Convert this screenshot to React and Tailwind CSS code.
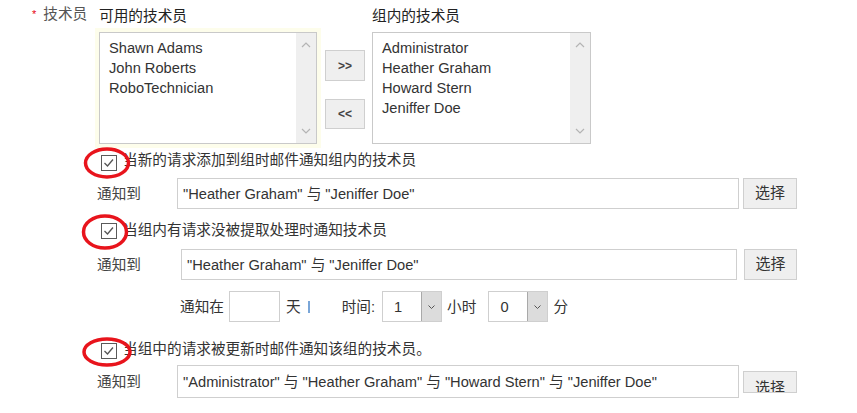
import React from 'react';

const FONT = { fontFamily: '"Liberation Sans", "Noto Sans CJK SC", sans-serif' };

const available = ['Shawn Adams', 'John Roberts', 'RoboTechnician'];
const members = ['Administrator', 'Heather Graham', 'Howard Stern', 'Jeniffer Doe'];

// Fake listbox with a windows style scrollbar
const ListBox = ({ items, width }) => (
    <div className={`flex h-[112px] border border-[#c9c9c9] bg-white ${width}`}>
        <div className="flex-1 pl-[9px] pt-[5px] leading-[20px]">
            {items.map((name) => (
                <div key={name}>{name}</div>
            ))}
        </div>
        <div className="w-[20px] bg-[#efefef] flex flex-col items-center justify-between py-[9px]">
            <svg width="10" height="6" viewBox="0 0 10 6">
                <polyline points="1,5 5,1 9,5" fill="none" stroke="#b4b4b4" strokeWidth="1.2" />
            </svg>
            <svg width="10" height="6" viewBox="0 0 10 6">
                <polyline points="1,1 5,5 9,1" fill="none" stroke="#b4b4b4" strokeWidth="1.2" />
            </svg>
        </div>
    </div>
);

const CheckBox = ({ className }) => (
    <svg width="16" height="16" viewBox="0 0 16 16" className={className}>
        <rect x="0.5" y="0.5" width="15" height="15" fill="#fff" stroke="#5a5a5a" />
        <polyline points="3.5,8 6.5,11 12,4.5" fill="none" stroke="#555" strokeWidth="1.3" />
    </svg>
);

const NotifyRow = ({ value, inputClass, buttonClass, className }) => (
    <div className={`flex pl-[97px] ${className}`}>
        <div className="w-[80px] self-center text-[#444]">通知到</div>
        <div className={`border border-[#cfcfcf] bg-white pl-[5px] flex items-center ${inputClass}`}>
            {value}
        </div>
        <button className={`border border-[#cfcfcf] bg-[#efefef] text-[15px] ${buttonClass}`}>
            选择
        </button>
    </div>
);

const Select = ({ value }) => (
    <div className="flex w-[60px] h-[31px] border border-[#cfcfcf] bg-white">
        <div className="flex-1 pl-[11px] flex items-center">{value}</div>
        <div className="w-[20px] bg-[#dcdcdc] border-l border-[#a9a9a9] flex items-center justify-center">
            <svg width="7" height="4" viewBox="0 0 7 4">
                <polyline points="0.5,0.5 3.5,3.5 6.5,0.5" fill="none" stroke="#555" strokeWidth="1" />
            </svg>
        </div>
    </div>
);

export default function App() {
    return (
        <div style={FONT} className="relative w-[857px] h-[413px] overflow-hidden bg-white text-[#333] text-[14.67px]">

            {/* Technicians pickers */}
            <div className="flex items-start">
                <div className="w-[95px] pl-[32px] pt-[4px] flex leading-[20px]">
                    <span className="text-[#e60012] text-[11px] mr-[7px]">*</span>
                    <span className="text-[#555]">技术员</span>
                </div>
                <div>
                    <div className="h-[28px] pl-[4px] pt-[6px] leading-[20px] text-[#222]">可用的技术员</div>
                    <div className="bg-[#fdfdeb] p-[4px]">
                        <ListBox items={available} width="w-[218px]" />
                    </div>
                </div>
                <div className="ml-[4px] pt-[50px] flex flex-col">
                    <button className="w-[40px] h-[31px] border border-[#cfcfcf] bg-[#efefef] text-[12px] font-bold text-[#444]">&gt;&gt;</button>
                    <button className="mt-[18px] w-[40px] h-[30px] border border-[#cfcfcf] bg-[#efefef] text-[12px] font-bold text-[#444]">&lt;&lt;</button>
                </div>
                <div className="ml-[7px]">
                    <div className="h-[32px] pt-[6px] leading-[20px] text-[#222]">组内的技术员</div>
                    <ListBox items={members} width="w-[219px]" />
                </div>
            </div>

            {/* New request option */}
            <div className="mt-[2px] flex items-start pl-[101px]">
                <CheckBox className="mt-[5px]" />
                <div className="ml-[6px] leading-[20px]">当新的请求添加到组时邮件通知组内的技术员</div>
            </div>
            <NotifyRow
                className="mt-[7px]"
                value={'"Heather Graham" 与 "Jeniffer Doe"'}
                inputClass="w-[562px] h-[31px]"
                buttonClass="ml-[4px] w-[54px] h-[31px]"
            />

            {/* Unpicked request option */}
            <div className="mt-[11px] flex items-start pl-[101px]">
                <CheckBox className="mt-[3px]" />
                <div className="ml-[6px] leading-[20px]">当组内有请求没被提取处理时通知技术员</div>
            </div>
            <NotifyRow
                className="mt-[9px]"
                value={'"Heather Graham" 与 "Jeniffer Doe"'}
                inputClass="ml-[4px] w-[556px] h-[31px]"
                buttonClass="ml-[7px] w-[53px] h-[31px]"
            />
            <div className="mt-[11px] flex items-center pl-[180px] h-[31px]">
                <span>通知在</span>
                <div className="ml-[5px] w-[51px] h-[31px] border border-[#cfcfcf] bg-white" />
                <span className="ml-[6px]">天</span>
                <span className="ml-[7px] w-[2px] h-[12px] bg-[#7aa6d8]" />
                <span className="ml-[32px]">时间:</span>
                <div className="ml-[7px]"><Select value="1" /></div>
                <span className="ml-[5px]">小时</span>
                <div className="ml-[12px]"><Select value="0" /></div>
                <span className="ml-[5px]">分</span>
            </div>

            {/* Updated request option */}
            <div className="mt-[17px] flex items-start pl-[101px]">
                <CheckBox className="mt-[4px]" />
                <div className="ml-[6px] leading-[20px]">当组中的请求被更新时邮件通知该组的技术员。</div>
            </div>
            <NotifyRow
                className="mt-[6px] items-start"
                value={'"Administrator" 与 "Heather Graham" 与 "Howard Stern" 与 "Jeniffer Doe"'}
                inputClass="w-[562px] h-[33px]"
                buttonClass="ml-[4px] mt-[6px] w-[54px] h-[22px] overflow-hidden pt-[6px] leading-[20px]"
            />

            {/* Red annotation circles */}
            <svg className="absolute inset-0 pointer-events-none" width="857" height="413">
                <g fill="none" stroke="#e8141c" strokeWidth="3.5">
                    <ellipse cx="107" cy="163" rx="21.5" ry="14" />
                    <ellipse cx="105" cy="232" rx="21.5" ry="16" />
                    <ellipse cx="107" cy="352" rx="23" ry="13" />
                </g>
            </svg>
        </div>
    );
}
